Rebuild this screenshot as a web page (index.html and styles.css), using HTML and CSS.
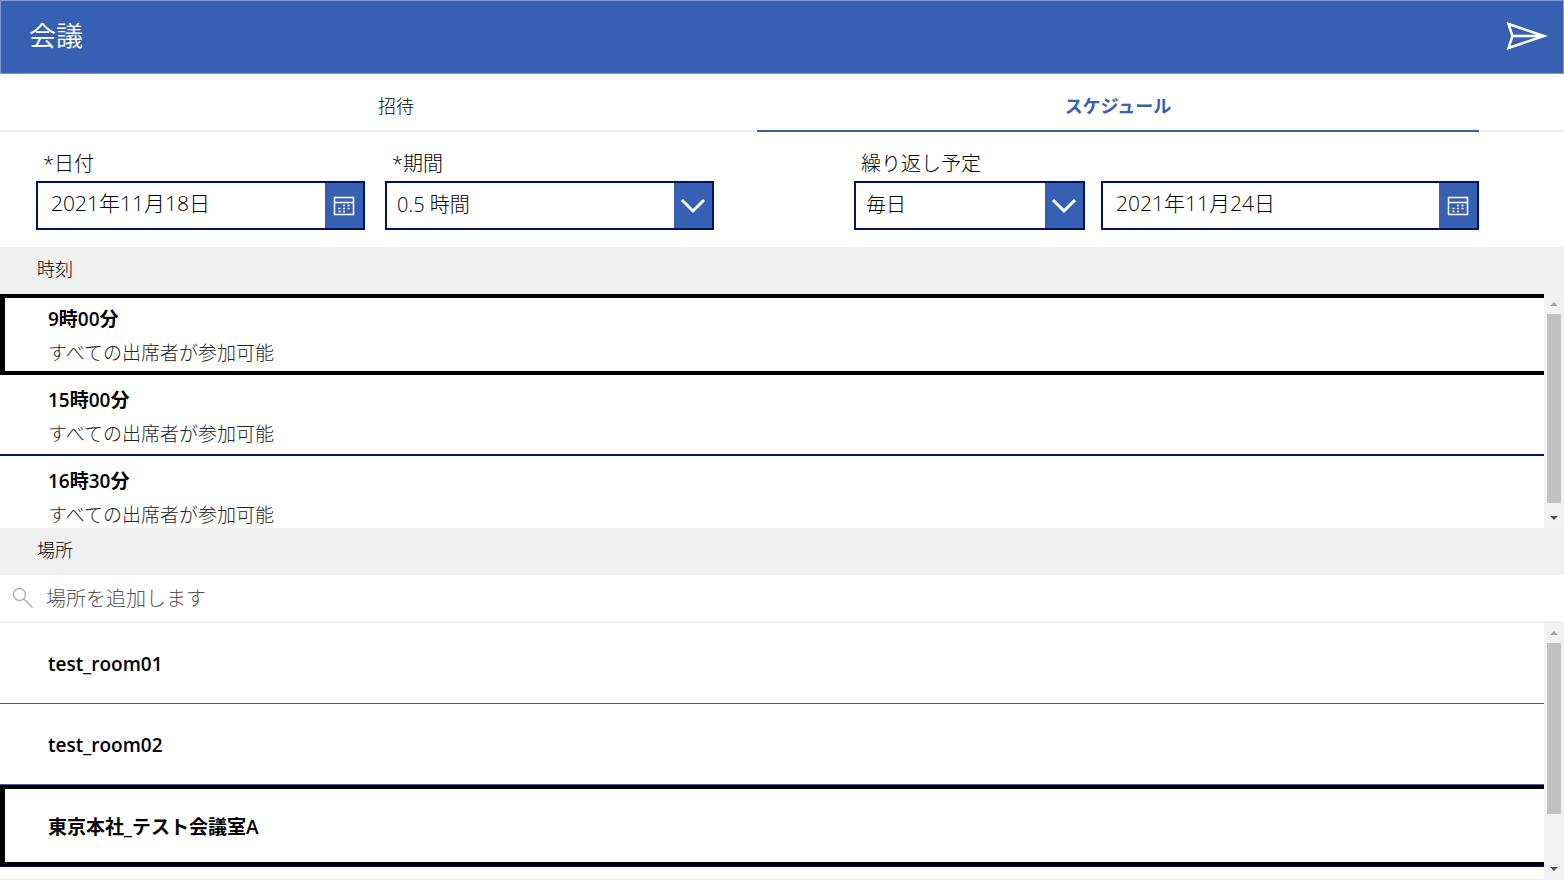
FILE: index.html
```html
<!DOCTYPE html>
<html lang="ja">
<head>
<meta charset="utf-8">
<meta name="viewport" content="width=device-width, initial-scale=1">
<title>会議</title>
<link rel="stylesheet" href="styles.css">
</head>
<body>
<div class="app">
  <header class="header">
    <h1 class="title">会議</h1>
    <button class="send" type="button" aria-label="送信">
      <svg viewBox="0 0 44 30" width="44" height="30" aria-hidden="true"><path d="M3.500 3L39 15L3.500 27L7.500 15L3.500 3ZM7.500 15H36" fill="none" stroke="currentColor" stroke-width="2.500"/></svg>
    </button>
  </header>

  <nav class="tabs" role="tablist">
    <button class="tab" type="button" role="tab" aria-selected="false">招待</button>
    <button class="tab tab-active" type="button" role="tab" aria-selected="true">スケジュール</button>
  </nav>

  <form class="form">
    <div class="group group-when">
      <div class="field">
        <label class="label" for="date">*日付</label>
        <div class="control">
          <input class="input" id="date" type="text" value="2021年11月18日">
          <button class="control-button" type="button" aria-label="カレンダーを開く">
            <svg viewBox="0 0 22 20" width="22" height="20" aria-hidden="true"><path d="M1.500 1.500H20.500V18.500H1.500ZM1.500 6.500H20.500" fill="none" stroke="currentColor" stroke-width="1.500"/><path d="M10 9.500h2M14.500 9.500h2M5.500 12.500h2M10 12.500h2M14.500 12.500h2M5.500 15.500h2M10 15.500h2" stroke="currentColor" stroke-width="1.500"/></svg>
          </button>
        </div>
      </div>
      <div class="field">
        <label class="label" for="duration">*期間</label>
        <div class="control">
          <select class="select" id="duration"><option>0.5 時間</option></select>
          <span class="control-button chevron" aria-hidden="true"><svg viewBox="0 0 26 16" width="26" height="16"><path d="M2 2L13 13L24 2" fill="none" stroke="currentColor" stroke-width="3"/></svg></span>
        </div>
      </div>
    </div>
    <div class="group group-repeat">
      <div class="field field-repeat">
        <label class="label" for="repeat">繰り返し予定</label>
        <div class="control">
          <select class="select" id="repeat"><option>毎日</option></select>
          <span class="control-button chevron" aria-hidden="true"><svg viewBox="0 0 26 16" width="26" height="16"><path d="M2 2L13 13L24 2" fill="none" stroke="currentColor" stroke-width="3"/></svg></span>
        </div>
      </div>
      <div class="field field-until">
        <div class="control">
          <input class="input" type="text" aria-label="繰り返しの終了日" value="2021年11月24日">
          <button class="control-button" type="button" aria-label="カレンダーを開く">
            <svg viewBox="0 0 22 20" width="22" height="20" aria-hidden="true"><path d="M1.500 1.500H20.500V18.500H1.500ZM1.500 6.500H20.500" fill="none" stroke="currentColor" stroke-width="1.500"/><path d="M10 9.500h2M14.500 9.500h2M5.500 12.500h2M10 12.500h2M14.500 12.500h2M5.500 15.500h2M10 15.500h2" stroke="currentColor" stroke-width="1.500"/></svg>
          </button>
        </div>
      </div>
    </div>
  </form>

  <h2 class="section">時刻</h2>
  <div class="panel panel-times">
    <ul class="list">
      <li><button class="row row-time row-selected" type="button"><span class="name">9時00分</span><span class="note">すべての出席者が参加可能</span></button></li>
      <li><button class="row row-time" type="button"><span class="name">15時00分</span><span class="note">すべての出席者が参加可能</span></button></li>
      <li><button class="row row-time" type="button"><span class="name">16時30分</span><span class="note">すべての出席者が参加可能</span></button></li>
    </ul>
    <div class="scrollbar" aria-hidden="true">
      <span class="arrow arrow-up"></span>
      <span class="track"><span class="thumb thumb-times"></span></span>
      <span class="arrow arrow-down"></span>
    </div>
  </div>

  <h2 class="section">場所</h2>
  <div class="search">
    <svg class="search-icon" viewBox="0 0 22 22" width="22" height="22" aria-hidden="true"><circle cx="7.500" cy="7.500" r="6" fill="none" stroke="currentColor" stroke-width="1.400"/><path d="M12 12L20.500 20.500" stroke="currentColor" stroke-width="1.600"/></svg>
    <input class="search-input" type="text" aria-label="場所" placeholder="場所を追加します">
  </div>
  <div class="panel panel-rooms">
    <ul class="list">
      <li><button class="row row-room" type="button"><span class="name">test_room01</span></button></li>
      <li><button class="row row-room" type="button"><span class="name">test_room02</span></button></li>
      <li class="last"><button class="row row-room row-selected" type="button"><span class="name">東京本社_テスト会議室A</span></button></li>
    </ul>
    <div class="scrollbar" aria-hidden="true">
      <span class="arrow arrow-up"></span>
      <span class="track"><span class="thumb thumb-rooms"></span></span>
      <span class="arrow arrow-down"></span>
    </div>
  </div>
</div>
</body>
</html>
```
FILE: styles.css
```css
* {
  box-sizing: border-box;
}

:root {
  --blue: #3860b2;
  --navy: #00126b;
  --grey: #efefef;
}

body {
  margin: 0;
  background: #fff;
  color: #000;
  font-family: "Open Sans", "Noto Sans CJK JP", sans-serif;
  font-weight: 300;
}

button,
input,
select {
  margin: 0;
  padding: 0;
  border: 0;
  border-radius: 0;
  background: none;
  color: inherit;
  font: inherit;
}

.app {
  display: flex;
  flex-direction: column;
  height: 100vh;
  border-bottom: 1px solid var(--grey);
}

.header {
  display: flex;
  flex: none;
  align-items: center;
  justify-content: space-between;
  height: 74px;
  padding: 0 14px 2px 28px;
  border: 1px solid #7f9acb;
  background: var(--blue);
  color: #fff;
}

.title {
  margin: 0;
  font-size: 27px;
  line-height: 36px;
  font-weight: 350;
}

.send,
.send svg,
.control-button svg {
  display: block;
}

.tabs {
  display: flex;
  flex: none;
  height: 58px;
  padding: 0 85px 0 35px;
  box-shadow: inset 0 -2px var(--grey);
}

.tab {
  flex: 1;
  padding-top: 6px;
  border-bottom: 2px solid transparent;
  font-size: 18px;
}

.tab-active {
  border-bottom-color: var(--blue);
  color: var(--blue);
  font-weight: 600;
}

.form {
  display: flex;
  flex: none;
  gap: 140px;
  height: 115px;
  padding: 17px 85px 0 36px;
}

.group {
  display: flex;
  min-width: 0;
}

.group-when {
  flex: 678;
  gap: 20px;
}

.group-repeat {
  flex: 625;
  gap: 16px;
}

.field {
  display: flex;
  flex: 1;
  flex-direction: column;
  justify-content: flex-end;
  height: 81px;
  min-width: 0;
}

.field-repeat {
  flex: 231;
}

.field-until {
  flex: 378;
}

.label {
  padding: 0 0 2px 7px;
  font-size: 20px;
  line-height: 30px;
}

.control {
  display: flex;
  flex: none;
  position: relative;
  height: 49px;
  border: 2px solid var(--navy);
}

.input {
  flex: 1;
  min-width: 0;
  padding: 0 12px 8px 13px;
  font-size: 21px;
}

.select {
  flex: 1;
  min-width: 0;
  padding: 0 48px 2px 10px;
  appearance: none;
  font-size: 20px;
}

.control-button {
  display: flex;
  flex: none;
  align-items: center;
  justify-content: center;
  width: 38px;
  background: var(--blue);
  color: #fff;
}

.chevron {
  position: absolute;
  top: 0;
  right: 0;
  bottom: 0;
  pointer-events: none;
}

.section {
  flex: none;
  margin: 0;
  padding: 0 37px 2px;
  background: var(--grey);
  font-size: 18px;
  line-height: 45px;
  font-weight: 300;
}

.panel {
  display: flex;
  overflow: hidden;
}

.panel-times {
  flex: 234 0 0;
}

.panel-rooms {
  flex: 256 0 0;
}

.list {
  flex: 1;
  margin: 0;
  padding: 0;
  list-style: none;
}

.last {
  border-bottom: 1px solid var(--navy);
}

.row {
  display: flex;
  flex-direction: column;
  justify-content: center;
  width: 100%;
  height: 81px;
  padding: 2px 0 0 48px;
  border-bottom: 2px solid var(--navy);
  text-align: left;
}

.row-time {
  padding-top: 4px;
}

.row-room {
  border-bottom: 1px solid #4d5a9c;
}

.row-selected {
  padding: 2px 0 0 43px;
  border: 4px solid #000;
  border-left-width: 5px;
  border-right: 0;
}

.name {
  font-size: 19px;
  line-height: 34px;
  font-weight: 600;
}

.note {
  color: #222;
  font-size: 19px;
  line-height: 34px;
}

.search {
  display: flex;
  flex: none;
  align-items: center;
  gap: 12px;
  height: 48px;
  padding: 0 12px;
  border-bottom: 2px solid var(--grey);
}

.search-icon {
  color: #b0b0b0;
}

.search-input {
  flex: 1;
  min-width: 0;
  height: 40px;
  font-size: 20px;
}

.search-input::placeholder {
  color: #555;
}

.scrollbar {
  display: flex;
  flex: none;
  flex-direction: column;
  align-items: center;
  width: 20px;
  padding: 8px 0 8px;
  background: #f1f1f1;
}

.arrow {
  border: 4px solid transparent;
}

.arrow-up {
  border-top: 0;
  border-bottom-color: #a3a3a3;
}

.arrow-down {
  border-bottom: 0;
  border-top-color: #505050;
}

.track {
  flex: 1;
  width: 14px;
  padding: 8px 0 13px;
}

.thumb {
  display: block;
  background: #c1c1c1;
}

.thumb-times {
  height: 100%;
}

.thumb-rooms {
  height: 81%;
}
```
